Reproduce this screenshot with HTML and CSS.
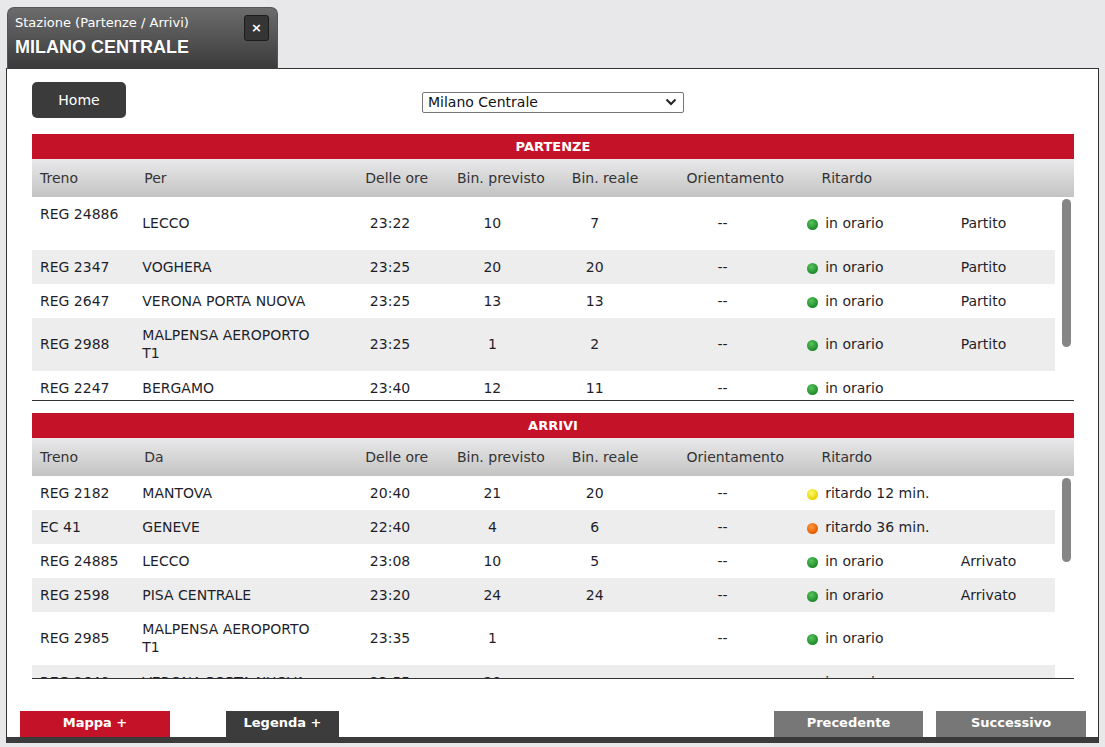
FILE: index.html
```html
<!DOCTYPE html>
<html lang="it">
<head>
<meta charset="utf-8">
<title>Stazione - Milano Centrale</title>
<link rel="stylesheet" href="styles.css">
</head>
<body>
<div class="window">
  <div class="tab">
    <div class="tab-sub">Stazione (Partenze / Arrivi)</div>
    <div class="tab-title">MILANO CENTRALE</div>
    <div class="close">×</div>
  </div>
  <div class="panel">
    <div class="topbar">
      <div class="home">Home</div>
      <div class="select"><span>Milano Centrale</span>
        <svg width="12" height="8" viewBox="0 0 12 8"><path d="M1.5 1.5 L6 6 L10.5 1.5" fill="none" stroke="#222" stroke-width="2"/></svg>
      </div>
      <div></div>
    </div>

    <div class="section">
      <div class="sec-title">PARTENZE</div>
      <div class="thead row-grid">
        <div class="l">Treno</div><div class="l">Per</div><div class="c">Delle ore</div><div class="c">Bin. previsto</div><div class="c">Bin. reale</div><div class="c">Orientamento</div><div class="l">Ritardo</div><div></div>
      </div>
      <div class="tbody">
        <div class="rows">
          <div class="row row-grid tall"><div class="l top">REG 24886<br>&nbsp;</div><div class="l dest">LECCO</div><div class="c">23:22</div><div class="c">10</div><div class="c">7</div><div class="c">--</div><div class="l"><i class="dot green"></i>in orario</div><div class="l">Partito</div></div>
          <div class="row row-grid alt"><div class="l">REG 2347</div><div class="l dest">VOGHERA</div><div class="c">23:25</div><div class="c">20</div><div class="c">20</div><div class="c">--</div><div class="l"><i class="dot green"></i>in orario</div><div class="l">Partito</div></div>
          <div class="row row-grid"><div class="l">REG 2647</div><div class="l dest">VERONA PORTA NUOVA</div><div class="c">23:25</div><div class="c">13</div><div class="c">13</div><div class="c">--</div><div class="l"><i class="dot green"></i>in orario</div><div class="l">Partito</div></div>
          <div class="row row-grid alt tall"><div class="l">REG 2988</div><div class="l dest">MALPENSA AEROPORTO T1</div><div class="c">23:25</div><div class="c">1</div><div class="c">2</div><div class="c">--</div><div class="l"><i class="dot green"></i>in orario</div><div class="l">Partito</div></div>
          <div class="row row-grid"><div class="l">REG 2247</div><div class="l dest">BERGAMO</div><div class="c">23:40</div><div class="c">12</div><div class="c">11</div><div class="c">--</div><div class="l"><i class="dot green"></i>in orario</div><div class="l"></div></div>
        </div>
        <div class="scroll"><div class="thumb thumb-p"></div></div>
      </div>
    </div>

    <div class="section second">
      <div class="sec-title">ARRIVI</div>
      <div class="thead row-grid">
        <div class="l">Treno</div><div class="l">Da</div><div class="c">Delle ore</div><div class="c">Bin. previsto</div><div class="c">Bin. reale</div><div class="c">Orientamento</div><div class="l">Ritardo</div><div></div>
      </div>
      <div class="tbody short">
        <div class="rows">
          <div class="row row-grid"><div class="l">REG 2182</div><div class="l dest">MANTOVA</div><div class="c">20:40</div><div class="c">21</div><div class="c">20</div><div class="c">--</div><div class="l"><i class="dot yellow"></i>ritardo 12 min.</div><div class="l"></div></div>
          <div class="row row-grid alt"><div class="l">EC 41</div><div class="l dest">GENEVE</div><div class="c">22:40</div><div class="c">4</div><div class="c">6</div><div class="c">--</div><div class="l"><i class="dot orange"></i>ritardo 36 min.</div><div class="l"></div></div>
          <div class="row row-grid"><div class="l">REG 24885</div><div class="l dest">LECCO</div><div class="c">23:08</div><div class="c">10</div><div class="c">5</div><div class="c">--</div><div class="l"><i class="dot green"></i>in orario</div><div class="l">Arrivato</div></div>
          <div class="row row-grid alt"><div class="l">REG 2598</div><div class="l dest">PISA CENTRALE</div><div class="c">23:20</div><div class="c">24</div><div class="c">24</div><div class="c">--</div><div class="l"><i class="dot green"></i>in orario</div><div class="l">Arrivato</div></div>
          <div class="row row-grid tall"><div class="l">REG 2985</div><div class="l dest">MALPENSA AEROPORTO T1</div><div class="c">23:35</div><div class="c">1</div><div class="c"></div><div class="c">--</div><div class="l"><i class="dot green"></i>in orario</div><div class="l"></div></div>
          <div class="row row-grid alt"><div class="l">REG 2648</div><div class="l dest">VERONA PORTA NUOVA</div><div class="c">23:55</div><div class="c">20</div><div class="c"></div><div class="c">--</div><div class="l"><i class="dot green"></i>in orario</div><div class="l"></div></div>
        </div>
        <div class="scroll"><div class="thumb thumb-a"></div></div>
      </div>
    </div>

    <div class="footer">
      <div class="btn red">Mappa +</div>
      <div class="btn dark legenda">Legenda +</div>
      <div class="spacer"></div>
      <div class="btn grey prec">Precedente</div>
      <div class="btn grey succ">Successivo</div>
    </div>
  </div>
</div>
</body>
</html>
```
FILE: styles.css
```css
* { box-sizing: border-box; }
html, body { margin: 0; }
body {
  background: #e8e7ea;
  font-family: "DejaVu Sans", "Noto Sans", sans-serif;
  font-size: 14px;
  color: #1f1f2b;
  width: 1105px;
  height: 747px;
  overflow: hidden;
}
.window { padding: 7px 6px 0 6px; }
.tab {
  position: relative;
  z-index: 2;
  margin-left: 1px;
  margin-bottom: -1px;
  width: 271px;
  height: 62px;
  border-radius: 7px 7px 0 0;
  background: linear-gradient(#6c6c6c, #3a3a3a);
  border: 1px solid #555;
  border-bottom: none;
  padding: 7px 0 0 7px;
  color: #fff;
}
.tab-sub { font-size: 13px; line-height: 16px; }
.tab-title {
  font-family: "Liberation Sans", Arial, sans-serif;
  font-weight: bold;
  font-size: 18px;
  line-height: 22px;
  margin-top: 5px;
  text-shadow: 0 0 1px rgba(0,0,0,.5);
}
.close {
  position: absolute;
  top: 7px;
  right: 8px;
  width: 25px;
  height: 26px;
  background: #353535;
  border: 1px solid #1c1c1c;
  border-radius: 3px;
  color: #fff;
  font-weight: bold;
  font-size: 13px;
  line-height: 23px;
  text-align: center;
}
.panel {
  height: 675px;
  background: #fff;
  border: 1px solid #333;
  border-bottom: 6px solid #3b3b3b;
  display: flex;
  flex-direction: column;
  padding: 13px 24px 0 25px;
}
.topbar {
  display: grid;
  grid-template-columns: 1fr auto 1fr;
  align-items: center;
}
.home {
  width: 94px;
  height: 36px;
  background: #3b3b3b;
  color: #fff;
  border-radius: 5px;
  text-align: center;
  line-height: 36px;
  font-size: 14px;
}
.select {
  width: 262px;
  height: 21px;
  margin-top: 4px;
  border: 1px solid #767676;
  border-radius: 2px;
  display: flex;
  align-items: center;
  justify-content: space-between;
  padding: 0 6px 0 5px;
  font-size: 14px;
  color: #111;
}
.section { margin-top: 16px; }
.section.second { margin-top: 12px; }
.sec-title {
  height: 25px;
  background: #c41229;
  color: #fff;
  font-weight: bold;
  font-size: 13px;
  line-height: 25px;
  text-align: center;
}
.row-grid {
  display: grid;
  grid-template-columns: 10% 20% 10% 10% 10% 15% 15% 10%;
  align-items: center;
}
.thead {
  height: 38px;
  background: linear-gradient(#e9e9eb, #c3c3c3);
  color: #333;
}
.l { padding-left: 8px; padding-right: 8px; }
.dest { padding-right: 14px; }
.c { text-align: center; }
.tbody {
  height: 204px;
  display: flex;
  border-bottom: 1px solid #333;
}
.tbody.short { height: 203px; }
.rows {
  flex: 1;
  min-width: 0;
  overflow: hidden;
}
.scroll {
  width: 19px;
  flex: none;
  padding: 2px 3px 0 7px;
}
.thumb {
  background: #858585;
  border-radius: 5px;
}
.thumb-p { height: 148px; }
.thumb-a { height: 84px; }
.row {
  padding: 8px 0;
  line-height: 18px;
}
.row.tall { padding-bottom: 9px; }
.row.alt { background: #ededed; }
.top { align-self: start; }
.dot {
  display: inline-block;
  width: 11px;
  height: 11px;
  border-radius: 50%;
  margin-right: 7px;
  vertical-align: -2px;
}
.green { background: radial-gradient(circle at 40% 35%, #58c45a, #1e8a2c 70%); }
.yellow { background: radial-gradient(circle at 40% 35%, #fffc6a, #e3d300 70%); }
.orange { background: radial-gradient(circle at 40% 35%, #ff9a3a, #e35a00 70%); }
.footer {
  margin-top: auto;
  margin-left: -12px;
  margin-right: -12px;
  display: flex;
  align-items: flex-end;
}
.btn {
  height: 26px;
  color: #fff;
  font-weight: bold;
  font-size: 13px;
  line-height: 24px;
  text-align: center;
}
.red { background: #c41229; width: 150px; }
.dark { background: #3c3c3c; }
.legenda { width: 113px; margin-left: 56px; }
.spacer { flex: 1; }
.grey { background: #777; }
.prec { width: 149px; }
.succ { width: 150px; margin-left: 13px; }
```
